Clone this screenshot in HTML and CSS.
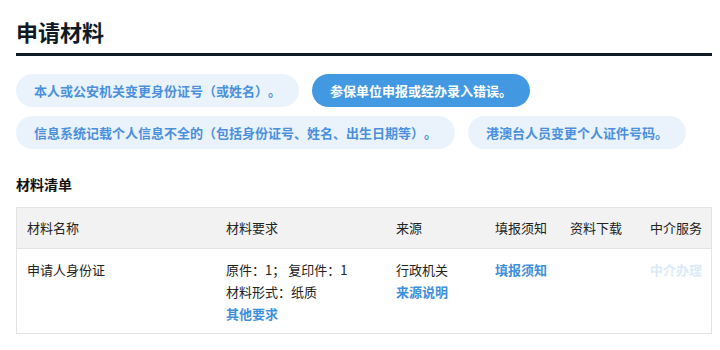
FILE: index.html
```html
<!doctype html>
<html lang="zh-CN">
<head>
	<meta charset="UTF-8">
	<title>申请材料</title>
	<link rel="stylesheet" href="styles.css">
</head>
<body>
	<div class="page">
		<h2 class="title">申请材料</h2>
		<div class="tags">
			<div class="tag">本人或公安机关变更身份证号（或姓名）。</div>
			<div class="tag active">参保单位申报或经办录入错误。</div>
			<div class="tag">信息系统记载个人信息不全的（包括身份证号、姓名、出生日期等）。</div>
			<div class="tag">港澳台人员变更个人证件号码。</div>
		</div>
		<h3 class="subtitle">材料清单</h3>
		<div class="table">
			<div class="row head">
				<div>材料名称</div>
				<div>材料要求</div>
				<div>来源</div>
				<div>填报须知</div>
				<div>资料下载</div>
				<div>中介服务</div>
			</div>
			<div class="row">
				<div>申请人身份证</div>
				<div>
					<p>原件：1； 复印件：1</p>
					<p>材料形式：纸质</p>
					<p><a class="link">其他要求</a></p>
				</div>
				<div>
					<p>行政机关</p>
					<p><a class="link">来源说明</a></p>
				</div>
				<div><a class="link">填报须知</a></div>
				<div></div>
				<div><a class="link off">中介办理</a></div>
			</div>
		</div>
	</div>
</body>
</html>
```

FILE: styles.css
```css
*{
	margin: 0;
	padding: 0;
	box-sizing: border-box;
}
body{
	font-family: "Noto Sans CJK SC", "Liberation Sans", sans-serif;
	color: #222;
	background: #fff;
	text-spacing-trim: space-all;
}
.page{
	padding: 16px 8px 0 16px;
}
.title{
	font-size: 22px;
	font-weight: 700;
	color: #111a24;
	line-height: 30px;
	padding-bottom: 7px;
	border-bottom: 3px solid #101b28;
}
.tags{
	display: flex;
	flex-wrap: wrap;
	gap: 9px 13px;
	margin-top: 18px;
}
.tag{
	height: 33px;
	line-height: 33px;
	padding: 0 18px;
	border-radius: 17px;
	background: #eaf3fc;
	color: #4a90dc;
	font-size: 13px;
	font-weight: 700;
}
.tag.active{
	background: #4299e1;
	color: #fff;
}
.subtitle{
	font-size: 14px;
	font-weight: 700;
	color: #111;
	margin-top: 25px;
	line-height: 20px;
}
.table{
	margin-top: 13px;
	border: 1px solid #e3e3e3;
	font-size: 13px;
}
.row{
	display: grid;
	grid-template-columns: 199px 170px 99px 75px 80px 1fr;
	padding: 10px 0 8px;
	line-height: 22px;
}
.row > div{
	padding-left: 10px;
}
.row.head{
	background: #f2f2f2;
	border-bottom: 1px solid #e3e3e3;
	padding: 9px 0 9px;
}
.link{
	color: #3e8fdc;
	font-weight: 700;
}
.link.off{
	color: #dbeaf8;
}
```
